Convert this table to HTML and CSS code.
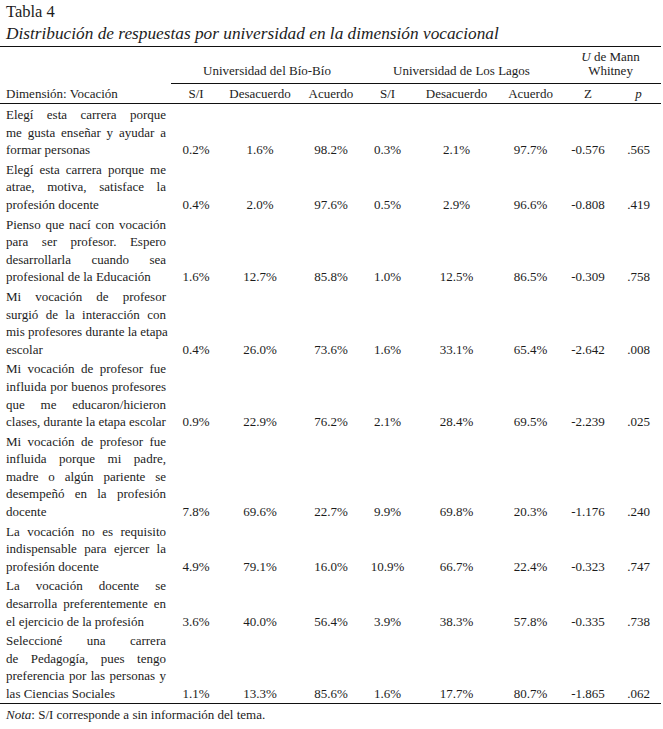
FILE: index.html
```html
<!DOCTYPE html>
<html lang="es">
<head>
<meta charset="utf-8">
<title>Tabla 4</title>
<link rel="stylesheet" href="styles.css">
</head>
<body>
<div class="page">
  <p class="label">Tabla 4</p>
  <p class="caption">Distribución de respuestas por universidad en la dimensión vocacional</p>
  <table class="data">
    <colgroup>
      <col class="c-item"><col class="c-si"><col class="c-des"><col class="c-acu">
      <col class="c-si2"><col class="c-des2"><col class="c-acu2"><col class="c-z"><col class="c-p">
    </colgroup>
    <thead>
      <tr class="group">
        <th class="blank"></th>
        <th colspan="3" class="grp">Universidad del Bío-Bío</th>
        <th colspan="3" class="grp">Universidad de Los Lagos</th>
        <th colspan="2" class="grp"><i>U</i> de Mann<br>Whitney</th>
      </tr>
      <tr class="sub">
        <th class="item-h">Dimensión: Vocación</th>
        <th>S/I</th><th>Desacuerdo</th><th>Acuerdo</th>
        <th>S/I</th><th>Desacuerdo</th><th>Acuerdo</th>
        <th>Z</th><th><i>p</i></th>
      </tr>
    </thead>
    <tbody>
      <tr>
        <td class="item"><span class="j">Elegí esta carrera porque</span><span class="j">me gusta enseñar y ayudar a</span><span class="l">formar personas</span></td>
        <td>0.2%</td><td>1.6%</td><td>98.2%</td><td>0.3%</td><td>2.1%</td><td>97.7%</td><td>-0.576</td><td>.565</td>
      </tr>
      <tr>
        <td class="item"><span class="j">Elegí esta carrera porque me</span><span class="j">atrae, motiva, satisface la</span><span class="l">profesión docente</span></td>
        <td>0.4%</td><td>2.0%</td><td>97.6%</td><td>0.5%</td><td>2.9%</td><td>96.6%</td><td>-0.808</td><td>.419</td>
      </tr>
      <tr>
        <td class="item"><span class="j">Pienso que nací con vocación</span><span class="j">para ser profesor. Espero</span><span class="j">desarrollarla cuando sea</span><span class="l">profesional de la Educación</span></td>
        <td>1.6%</td><td>12.7%</td><td>85.8%</td><td>1.0%</td><td>12.5%</td><td>86.5%</td><td>-0.309</td><td>.758</td>
      </tr>
      <tr>
        <td class="item"><span class="j">Mi vocación de profesor</span><span class="j">surgió de la interacción con</span><span class="j">mis profesores durante la etapa</span><span class="l">escolar</span></td>
        <td>0.4%</td><td>26.0%</td><td>73.6%</td><td>1.6%</td><td>33.1%</td><td>65.4%</td><td>-2.642</td><td>.008</td>
      </tr>
      <tr>
        <td class="item"><span class="j">Mi vocación de profesor fue</span><span class="j">influida por buenos profesores</span><span class="j">que me educaron/hicieron</span><span class="l">clases, durante la etapa escolar</span></td>
        <td>0.9%</td><td>22.9%</td><td>76.2%</td><td>2.1%</td><td>28.4%</td><td>69.5%</td><td>-2.239</td><td>.025</td>
      </tr>
      <tr>
        <td class="item"><span class="j">Mi vocación de profesor fue</span><span class="j">influida porque mi padre,</span><span class="j">madre o algún pariente se</span><span class="j">desempeñó en la profesión</span><span class="l">docente</span></td>
        <td>7.8%</td><td>69.6%</td><td>22.7%</td><td>9.9%</td><td>69.8%</td><td>20.3%</td><td>-1.176</td><td>.240</td>
      </tr>
      <tr>
        <td class="item"><span class="j">La vocación no es requisito</span><span class="j">indispensable para ejercer la</span><span class="l">profesión docente</span></td>
        <td>4.9%</td><td>79.1%</td><td>16.0%</td><td>10.9%</td><td>66.7%</td><td>22.4%</td><td>-0.323</td><td>.747</td>
      </tr>
      <tr>
        <td class="item"><span class="j">La vocación docente se</span><span class="j">desarrolla preferentemente en</span><span class="l">el ejercicio de la profesión</span></td>
        <td>3.6%</td><td>40.0%</td><td>56.4%</td><td>3.9%</td><td>38.3%</td><td>57.8%</td><td>-0.335</td><td>.738</td>
      </tr>
      <tr class="last">
        <td class="item"><span class="j">Seleccioné una carrera</span><span class="j">de Pedagogía, pues tengo</span><span class="j">preferencia por las personas y</span><span class="l">las Ciencias Sociales</span></td>
        <td>1.1%</td><td>13.3%</td><td>85.6%</td><td>1.6%</td><td>17.7%</td><td>80.7%</td><td>-1.865</td><td>.062</td>
      </tr>
    </tbody>
  </table>
  <p class="note"><i>Nota</i>: S/I corresponde a sin información del tema.</p>
</div>
</body>
</html>
```

FILE: styles.css
```css
html, body {
  margin: 0;
  padding: 0;
  background: #ffffff;
}

body {
  color: #1c1c1c;
  font-family: "Liberation Serif", "Times New Roman", serif;
}

.page {
  width: 661px;
  padding-top: 1px;
}

.label,
.caption {
  margin: 0;
  padding-left: 6px;
  font-size: 16.5px;
  line-height: 22px;
  font-weight: normal;
}

.caption {
  font-style: italic;
  font-size: 17.3px;
}

.data {
  margin-top: 1px;
  width: 661px;
  table-layout: fixed;
  border-collapse: collapse;
  border-spacing: 0;
  font-size: 13px;
}

.c-item { width: 171px; }
.c-si   { width: 50px; }
.c-des  { width: 78px; }
.c-acu  { width: 64px; }
.c-si2  { width: 49px; }
.c-des2 { width: 89px; }
.c-acu2 { width: 59px; }
.c-z    { width: 56px; }
.c-p    { width: 45px; }

.data th {
  font-weight: normal;
  text-align: center;
  padding: 0;
}

.group {
  height: 37px;
}

.group th {
  border-top: 1px solid #111;
  vertical-align: bottom;
  line-height: 14.7px;
  padding-bottom: 4px;
}

.group .grp {
  border-bottom: 1px solid #111;
}

.sub th {
  height: 19px;
  line-height: 17.6px;
  vertical-align: bottom;
  border-bottom: 1px solid #111;
}

.sub .item-h {
  text-align: left;
  padding-left: 6px;
}

.data td {
  padding: 2px 0 0;
  line-height: 17.6px;
  text-align: center;
  vertical-align: bottom;
}

.data td.item {
  padding: 2px 5px 0 6px;
  text-align: left;
}

.item .j,
.item .l {
  display: block;
  white-space: nowrap;
}

.item .j {
  text-align: justify;
  text-align-last: justify;
}

.last td {
  border-bottom: 1px solid #111;
}

.note {
  margin: 3px 0 0;
  padding-left: 6px;
  font-size: 13px;
  line-height: 15px;
}
```
